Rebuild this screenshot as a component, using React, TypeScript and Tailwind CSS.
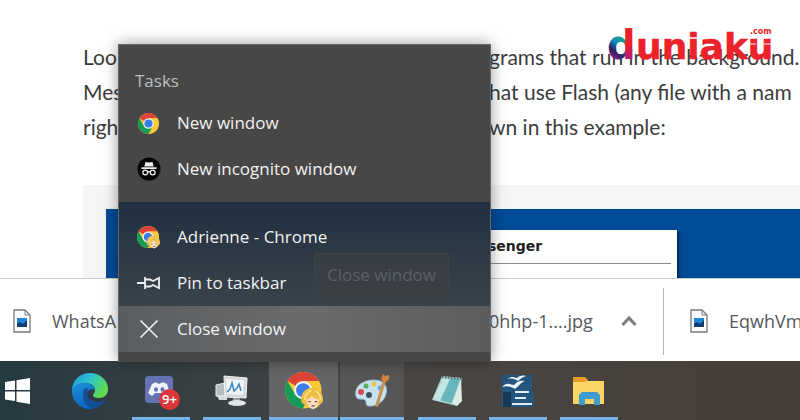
import type { ReactNode } from 'react';

interface MenuItem {
  label: string;
  icon: ReactNode;
}

const tasks: MenuItem[] = [
  { label: 'New window', icon: <ChromeIcon className="size-[21px]" /> },
  { label: 'New incognito window', icon: <IncognitoIcon /> },
];

const appItems: MenuItem[] = [
  { label: 'Adrienne - Chrome', icon: <ChromeProfileIcon className="size-[23px]" /> },
  { label: 'Pin to taskbar', icon: <PinIcon /> },
];

const lines = [
  { start: 'Loo', end: 'grams that run in the background.' },
  { start: 'Mes', end: 'hat use Flash (any file with a nam' },
  { start: 'righ', end: 'wn in this example:' },
];

export default function App() {
  return (
    <div className="relative flex h-screen flex-col overflow-hidden bg-white font-['Open_Sans','Noto_Sans',sans-serif]">
      <Article />
      <Downloads />
      <Taskbar />
      <JumpList />
      <Logo />
    </div>
  );
}

function Article() {
  return (
    <main className="min-h-0 flex-1 overflow-hidden pl-[83px] pt-[39px]">
      <div className="font-[Lato,sans-serif] text-[21px] leading-[35px] text-[#3c3c3c]">
        {lines.map((line) => (
          <p key={line.start} className="flex whitespace-nowrap">
            <span className="w-[406px] shrink-0">{line.start}</span>
            <span>{line.end}</span>
          </p>
        ))}
      </div>

      {/* Screenshot embedded in the article */}
      <div className="mt-[41px] h-full bg-[#f5f5f5] pl-[23px] pt-6">
        <div className="h-full bg-[#004c97] pl-[330px] pt-[21px]">
          <div className="h-full w-[241px] bg-white pr-[6px] shadow-[2px_2px_3px_#002550]">
            <p className="border-b border-[#8c8c84] pl-[52px] font-['DejaVu_Sans',sans-serif] text-[14px] font-bold leading-[33px] text-[#222]">
              senger
            </p>
          </div>
        </div>
      </div>
    </main>
  );
}

function Downloads() {
  return (
    <footer className="flex h-[83px] shrink-0 items-center overflow-hidden whitespace-nowrap border-t border-[#c9c9c9] bg-white pt-[2px] text-[18px] text-[#55585c]">
      <div className="flex w-[489px] shrink-0 items-center gap-[21px] pl-[13px]">
        <FileIcon />
        <span>WhatsA</span>
      </div>
      <span className="w-[132px] shrink-0">0hhp-1....jpg</span>
      <button type="button" aria-label="More actions" className="w-[42px] shrink-0">
        <svg viewBox="0 0 16 12" className="h-3 w-4" fill="none" stroke="#7a7c80" strokeWidth="3">
          <path d="M1.500 10 8 3l6.500 7" />
        </svg>
      </button>
      <div className="flex shrink-0 items-center gap-[21px] border-l border-[#b5b5b5] py-5 pl-[26px]">
        <FileIcon />
        <span>EqwhVm</span>
      </div>
    </footer>
  );
}

function JumpList() {
  return (
    <div
      role="menu"
      className="absolute bottom-[58px] left-[118px] w-[373px] border border-b-0 border-[#686868] bg-[#474747] text-[17px] text-[#f2f2f2] shadow-[0_0_14px_rgba(0,0,0,0.4)]"
    >
      <p className="px-4 pb-[7px] pt-6 leading-6 text-[#bdbdbd]">Tasks</p>
      {tasks.map((item) => (
        <MenuButton key={item.label} item={item} />
      ))}
      <div className="mt-[10px] bg-linear-to-b from-[#202f40] to-[#3a434a] pt-3">
        {appItems.map((item) => (
          <MenuButton key={item.label} item={item} />
        ))}
      </div>
      <div className="bg-linear-to-r from-[#5a5d60] via-[#6a6b6c] to-[#5b5c5d]">
        <MenuButton item={{ label: 'Close window', icon: <CloseIcon /> }} />
      </div>
      <div className="h-[10px]" />
      <div
        role="tooltip"
        className="absolute left-[195px] top-[208px] border border-[#3d4247] bg-[#3d4044]/70 px-3 py-2 leading-[26px] text-[#5d6064]"
      >
        Close window
      </div>
    </div>
  );
}

function MenuButton({ item }: { item: MenuItem }) {
  return (
    <button type="button" role="menuitem" className="flex h-[46px] w-full items-center gap-4 pl-[17px] text-left">
      <span className="flex w-[25px] justify-center">{item.icon}</span>
      {item.label}
    </button>
  );
}

function Taskbar() {
  return (
    <nav className="flex h-[59px] shrink-0 bg-linear-to-r from-[#253940] via-[#494745] via-50% to-[#463d36]">
      <TaskButton label="Start" className="w-[33px]">
        <svg viewBox="0 0 26 26" className="size-[26px]" fill="#fff">
          <path d="M1 4 11 2.500V12H1zM12.500 2.300 26 0v12H12.500zM1 13.500h10V23L1 21.500zM12.500 13.500H26V26l-13.500-2.200z" />
        </svg>
      </TaskButton>
      <TaskButton label="Microsoft Edge" className="ml-[22px] w-[70px]">
        <EdgeIcon />
      </TaskButton>
      <TaskButton label="Discord" open className="ml-[7px] w-[58px]">
        <DiscordIcon />
      </TaskButton>
      <TaskButton label="Task Manager" open className="ml-[13px] w-[58px]">
        <MonitorIcon />
      </TaskButton>
      <TaskButton label="Google Chrome" open className="ml-2 w-[69px] bg-[#646566]">
        <ChromeProfileIcon className="size-[38px]" />
      </TaskButton>
      <TaskButton label="Paint" open className="ml-[2px] w-[64px] bg-[#565656]">
        <PaintIcon />
      </TaskButton>
      <TaskButton label="Notepad" open className="ml-[14px] w-[58px]">
        <NotepadIcon />
      </TaskButton>
      <TaskButton label="OpenOffice Writer" open className="ml-[13px] w-[58px]">
        <WriterIcon />
      </TaskButton>
      <TaskButton label="File Explorer" open className="ml-[13px] w-[58px]">
        <FolderIcon />
      </TaskButton>
    </nav>
  );
}

interface TaskButtonProps {
  label: string;
  className: string;
  open?: boolean;
  children: ReactNode;
}

function TaskButton({ label, className, open, children }: TaskButtonProps) {
  return (
    <button
      type="button"
      aria-label={label}
      className={`flex shrink-0 items-center justify-center border-b-3 pt-1 ${open ? 'border-[#76b3e8]' : 'border-transparent'} ${className}`}
    >
      {children}
    </button>
  );
}

function Logo() {
  return (
    <svg
      viewBox="0 0 170 44"
      className="absolute right-[24px] top-[22px] h-11 w-[170px]"
      fontFamily="'DejaVu Sans', sans-serif"
      fontWeight="bold"
      strokeLinejoin="round"
    >
      <defs>
        <linearGradient id="logo-bowl" x1="0.800" y1="0" x2="0.500" y2="1">
          <stop offset="0.300" stopColor="#12a37e" />
          <stop offset="0.500" stopColor="#1489c4" />
          <stop offset="0.700" stopColor="#262262" />
          <stop offset="0.850" stopColor="#7a2284" />
        </linearGradient>
        <linearGradient id="logo-stem" x1="0" y1="0" x2="0" y2="1">
          <stop offset="0.500" stopColor="#ec2129" />
          <stop offset="0.850" stopColor="#b01c80" />
        </linearGradient>
        <pattern id="logo-d" patternUnits="userSpaceOnUse" width="170" height="44">
          <rect width="19" height="44" fill="url(#logo-bowl)" />
          <rect x="19" width="14" height="44" fill="url(#logo-stem)" />
        </pattern>
      </defs>
      <text x="1" y="37" fontSize="40" fill="url(#logo-d)">d</text>
      <text x="30" y="37" fontSize="36" fill="#ec2129" stroke="#ec2129" strokeWidth="0.500">uniaku</text>
      <path d="M142 22h8M158 22h9" stroke="#fff" />
      <text x="144" y="12" fontSize="8" fill="#ec2129">.com</text>
    </svg>
  );
}

function ChromeShapes() {
  return (
    <>
      <circle cx="24" cy="24" r="22" fill="#f9c938" />
      <path d="M24 24 5 13A22 22 0 0 1 43 13H24z" fill="#dc4437" />
      <path d="M5 13A22 22 0 0 0 24 46l9.500-16.500L24 34l-9.500-4.500z" fill="#159c58" />
      <path d="M43 13H24v11l9.500 5.500L24 46A22 22 0 0 0 43 13z" fill="#f9c938" />
      <circle cx="24" cy="24" r="11" fill="#f4f4f4" />
      <circle cx="24" cy="24" r="8.500" fill="#3c7ee8" />
    </>
  );
}

function ChromeIcon({ className }: { className: string }) {
  return (
    <svg viewBox="2 2 44 44" className={className}>
      <ChromeShapes />
    </svg>
  );
}

function ChromeProfileIcon({ className }: { className: string }) {
  return (
    <svg viewBox="2 2 46 46" className={className}>
      <ChromeShapes />
      <path d="M22 39c-2-10 4-18 13-18s14 8 13 17l-4 4-3 3H29l-3-3z" fill="#eebd45" />
      <path d="M28 35c3 0 5-2 6-5 2 3 5 5 9 5 0 6-2 11-7 12-5-1-8-6-8-12z" fill="#f8dfc3" />
      <path d="M30 38h3M38 38h3M34 43h4" stroke="#8a4a32" strokeWidth="1.500" />
      <path d="M26 36c0-6 3-10 8-12M45 36c0-5-2-9-6-11" fill="none" stroke="#fbe386" strokeWidth="2" />
    </svg>
  );
}

function IncognitoIcon() {
  return (
    <svg viewBox="0 0 24 24" className="size-6">
      <circle cx="12" cy="12" r="11.500" fill="#050505" />
      <path d="M8.500 5 12 5.500l3.500-.5 1.200 4.500H7.300zM4.500 10.300h15V12h-15z" fill="#eee" />
      <g fill="none" stroke="#eee" strokeWidth="1.300">
        <circle cx="8.300" cy="15.500" r="2.400" />
        <circle cx="15.700" cy="15.500" r="2.400" />
        <path d="M10.700 15c1-.6 1.600-.6 2.600 0" />
      </g>
    </svg>
  );
}

function PinIcon() {
  return (
    <svg viewBox="0 0 25 16" className="h-4 w-[25px]" fill="none" stroke="#f0f0f0" strokeWidth="1.800">
      <path d="M1 8h8M9 2v12M9 4.500h5l3 1.500 6-3v10l-6-3-3 1.500H9" />
    </svg>
  );
}

function CloseIcon() {
  return (
    <svg viewBox="0 0 20 20" className="size-5" fill="none" stroke="#eee" strokeWidth="1.700">
      <path d="m1.500 1.500 17 17M18.500 1.500l-17 17" />
    </svg>
  );
}

function FileIcon() {
  return (
    <svg viewBox="0 0 18 24" className="h-6 w-[18px] shrink-0">
      <path d="M1 1h11l5 5v17H1z" fill="#fcfcfc" stroke="#77797b" strokeWidth="1.300" />
      <path d="M12 1v5h5" fill="none" stroke="#77797b" />
      <path d="M4 9h10v9H4z" fill="#1c86d8" />
      <path d="m4 15 3-2 3 2 4-4v7H4z" fill="#123c70" />
    </svg>
  );
}

function EdgeIcon() {
  return (
    <svg viewBox="0 0 36 36" className="size-9">
      <defs>
        <linearGradient id="edge-top" x1="0" y1="0" x2="1" y2="0.500">
          <stop offset="0.100" stopColor="#219bdc" />
          <stop offset="0.500" stopColor="#2cc3cf" />
          <stop offset="1" stopColor="#62dc4d" />
        </linearGradient>
        <linearGradient id="edge-left" x1="0" y1="0" x2="0.500" y2="1">
          <stop offset="0" stopColor="#1a90df" />
          <stop offset="1" stopColor="#0b62b8" />
        </linearGradient>
      </defs>
      <path d="M0 18C0 7 8 0 18 0s18 7 18 16c0 6-4 9-9 9-4 0-6-1-6-3 0-1 2-2 2-5 0-4-4-7-10-7C7 10 2 13 0 18z" fill="url(#edge-top)" />
      <path d="M0 18c1-5 6-8 12-8 7 0 11 4 11 7-2-1-5-1-7 1-3 4 0 10 5 11 5 2 10 0 13-3-4 6-9 10-16 10C8 36 0 28 0 18z" fill="url(#edge-left)" />
      <path d="M12 16c-3 7 0 16 8 20 6-1 11-5 14-10-4 3-9 4-13 2-5-2-7-7-5-12-1-1-3-1-4 0z" fill="#124d96" />
    </svg>
  );
}

function DiscordIcon() {
  return (
    <span className="relative">
      <svg viewBox="0 0 34 34" className="size-[34px]">
        <rect x="1" y="2" width="28" height="27" rx="4" fill="#6573b5" />
        <path d="M8 10c2-1 4-2 5-1l2 1 2-1c2-1 4 0 6 1l3 9-4 3-3-3h-8l-3 3-4-3z" fill="#f3f4fb" />
        <ellipse cx="12" cy="15.500" rx="2" ry="2.300" fill="#6573b5" />
        <ellipse cx="18.500" cy="15.500" rx="2" ry="2.300" fill="#6573b5" />
      </svg>
      <span className="absolute -bottom-[2px] -right-[2px] flex size-[21px] items-center justify-center rounded-full bg-[#d9373c] text-[13px] font-semibold text-white">
        9+
      </span>
    </span>
  );
}

function MonitorIcon() {
  return (
    <svg viewBox="0 0 34 32" className="h-8 w-[34px]">
      <path d="M1 10l9-2v15l-9-2z" fill="#b8bcbc" stroke="#ededed" />
      <path d="M2 20h10v5H4z" fill="#dadcdc" />
      <path d="m9 1 23 2-1 20-21-1z" fill="#d6d8d8" stroke="#f2f2f2" />
      <path d="m11 4 18 1-1 15-16-1z" fill="#eef4f8" />
      <path d="m12 17 3-3 2-6 2 8 3-3 2-4 2 7" fill="none" stroke="#3c87bd" strokeWidth="1.500" />
      <path d="M18 23h7v3h-7z" fill="#999c9c" />
      <ellipse cx="22" cy="28" rx="9" ry="3" fill="#e3e4e4" />
    </svg>
  );
}

function PaintIcon() {
  return (
    <svg viewBox="0 0 36 36" className="size-9">
      <path d="M2 23C0 13 9 7 20 7c10 0 14 6 12 14-2 9-12 13-18 12-3-1-1-4-3-6-3-2-8 1-9-4z" fill="#c8e2ef" stroke="#94b5c6" />
      <circle cx="7" cy="19" r="3" fill="#d64c4d" />
      <circle cx="12" cy="13" r="2.500" fill="#55ad62" />
      <circle cx="20" cy="11" r="2.500" fill="#e8c848" />
      <circle cx="26" cy="15" r="2.500" fill="#69a6da" />
      <circle cx="15" cy="22" r="3" fill="#3f535e" />
      <path d="m29 7 3 1-8 26-3-1z" fill="#c89151" />
      <path d="M28 8c-1-3 0-5 1-7l2 2 4-1c1 4-1 7-5 7z" fill="#cf853e" />
    </svg>
  );
}

function NotepadIcon() {
  return (
    <svg viewBox="0 0 34 34" className="size-[34px]">
      <path d="m12 2 20 2-5 28-25-6z" fill="#a9cfcd" />
      <path d="m13 4 17 1-8 24-18-4z" fill="#65b7bc" />
      <path d="m13 4 7 1-10 22-7-2z" fill="#c3e5e3" />
      <path d="m22 29 9-24 1 22-5 5z" fill="#dcebe4" />
      <path d="m12 3 20 2" stroke="#59706e" strokeWidth="2" strokeDasharray="1.500 1.500" />
    </svg>
  );
}

function WriterIcon() {
  return (
    <svg viewBox="0 0 34 34" className="size-[34px]">
      <path d="M1 1h30v16l2 2v14H1z" fill="#24567d" />
      <path d="M2 18h8v15H2z" fill="#173854" />
      <path d="M1 13c5-6 9-2 12-2 3-4 7-5 11-4-4 1-6 5-10 8-4-2-8-4-13-2zM7 5c4-4 7-1 9-1 2-2 5-3 9-2-4 1-5 3-8 5-3-2-6-3-10-2z" fill="#edf5f8" />
      <path d="M14 18h14M14 24h11M11 30h20" stroke="#e4edf2" strokeWidth="2" />
    </svg>
  );
}

function FolderIcon() {
  return (
    <svg viewBox="0 0 34 30" className="h-[30px] w-[34px]">
      <path d="M1 2h12l3 3h16v23H1z" fill="#f9d566" />
      <path d="M1 1h12l3 3-3 2H1z" fill="#e59b2a" />
      <path d="M7 29V19l3-3h15l3 3v10h-6v-6h-9v6z" fill="#3e9bcf" />
    </svg>
  );
}
